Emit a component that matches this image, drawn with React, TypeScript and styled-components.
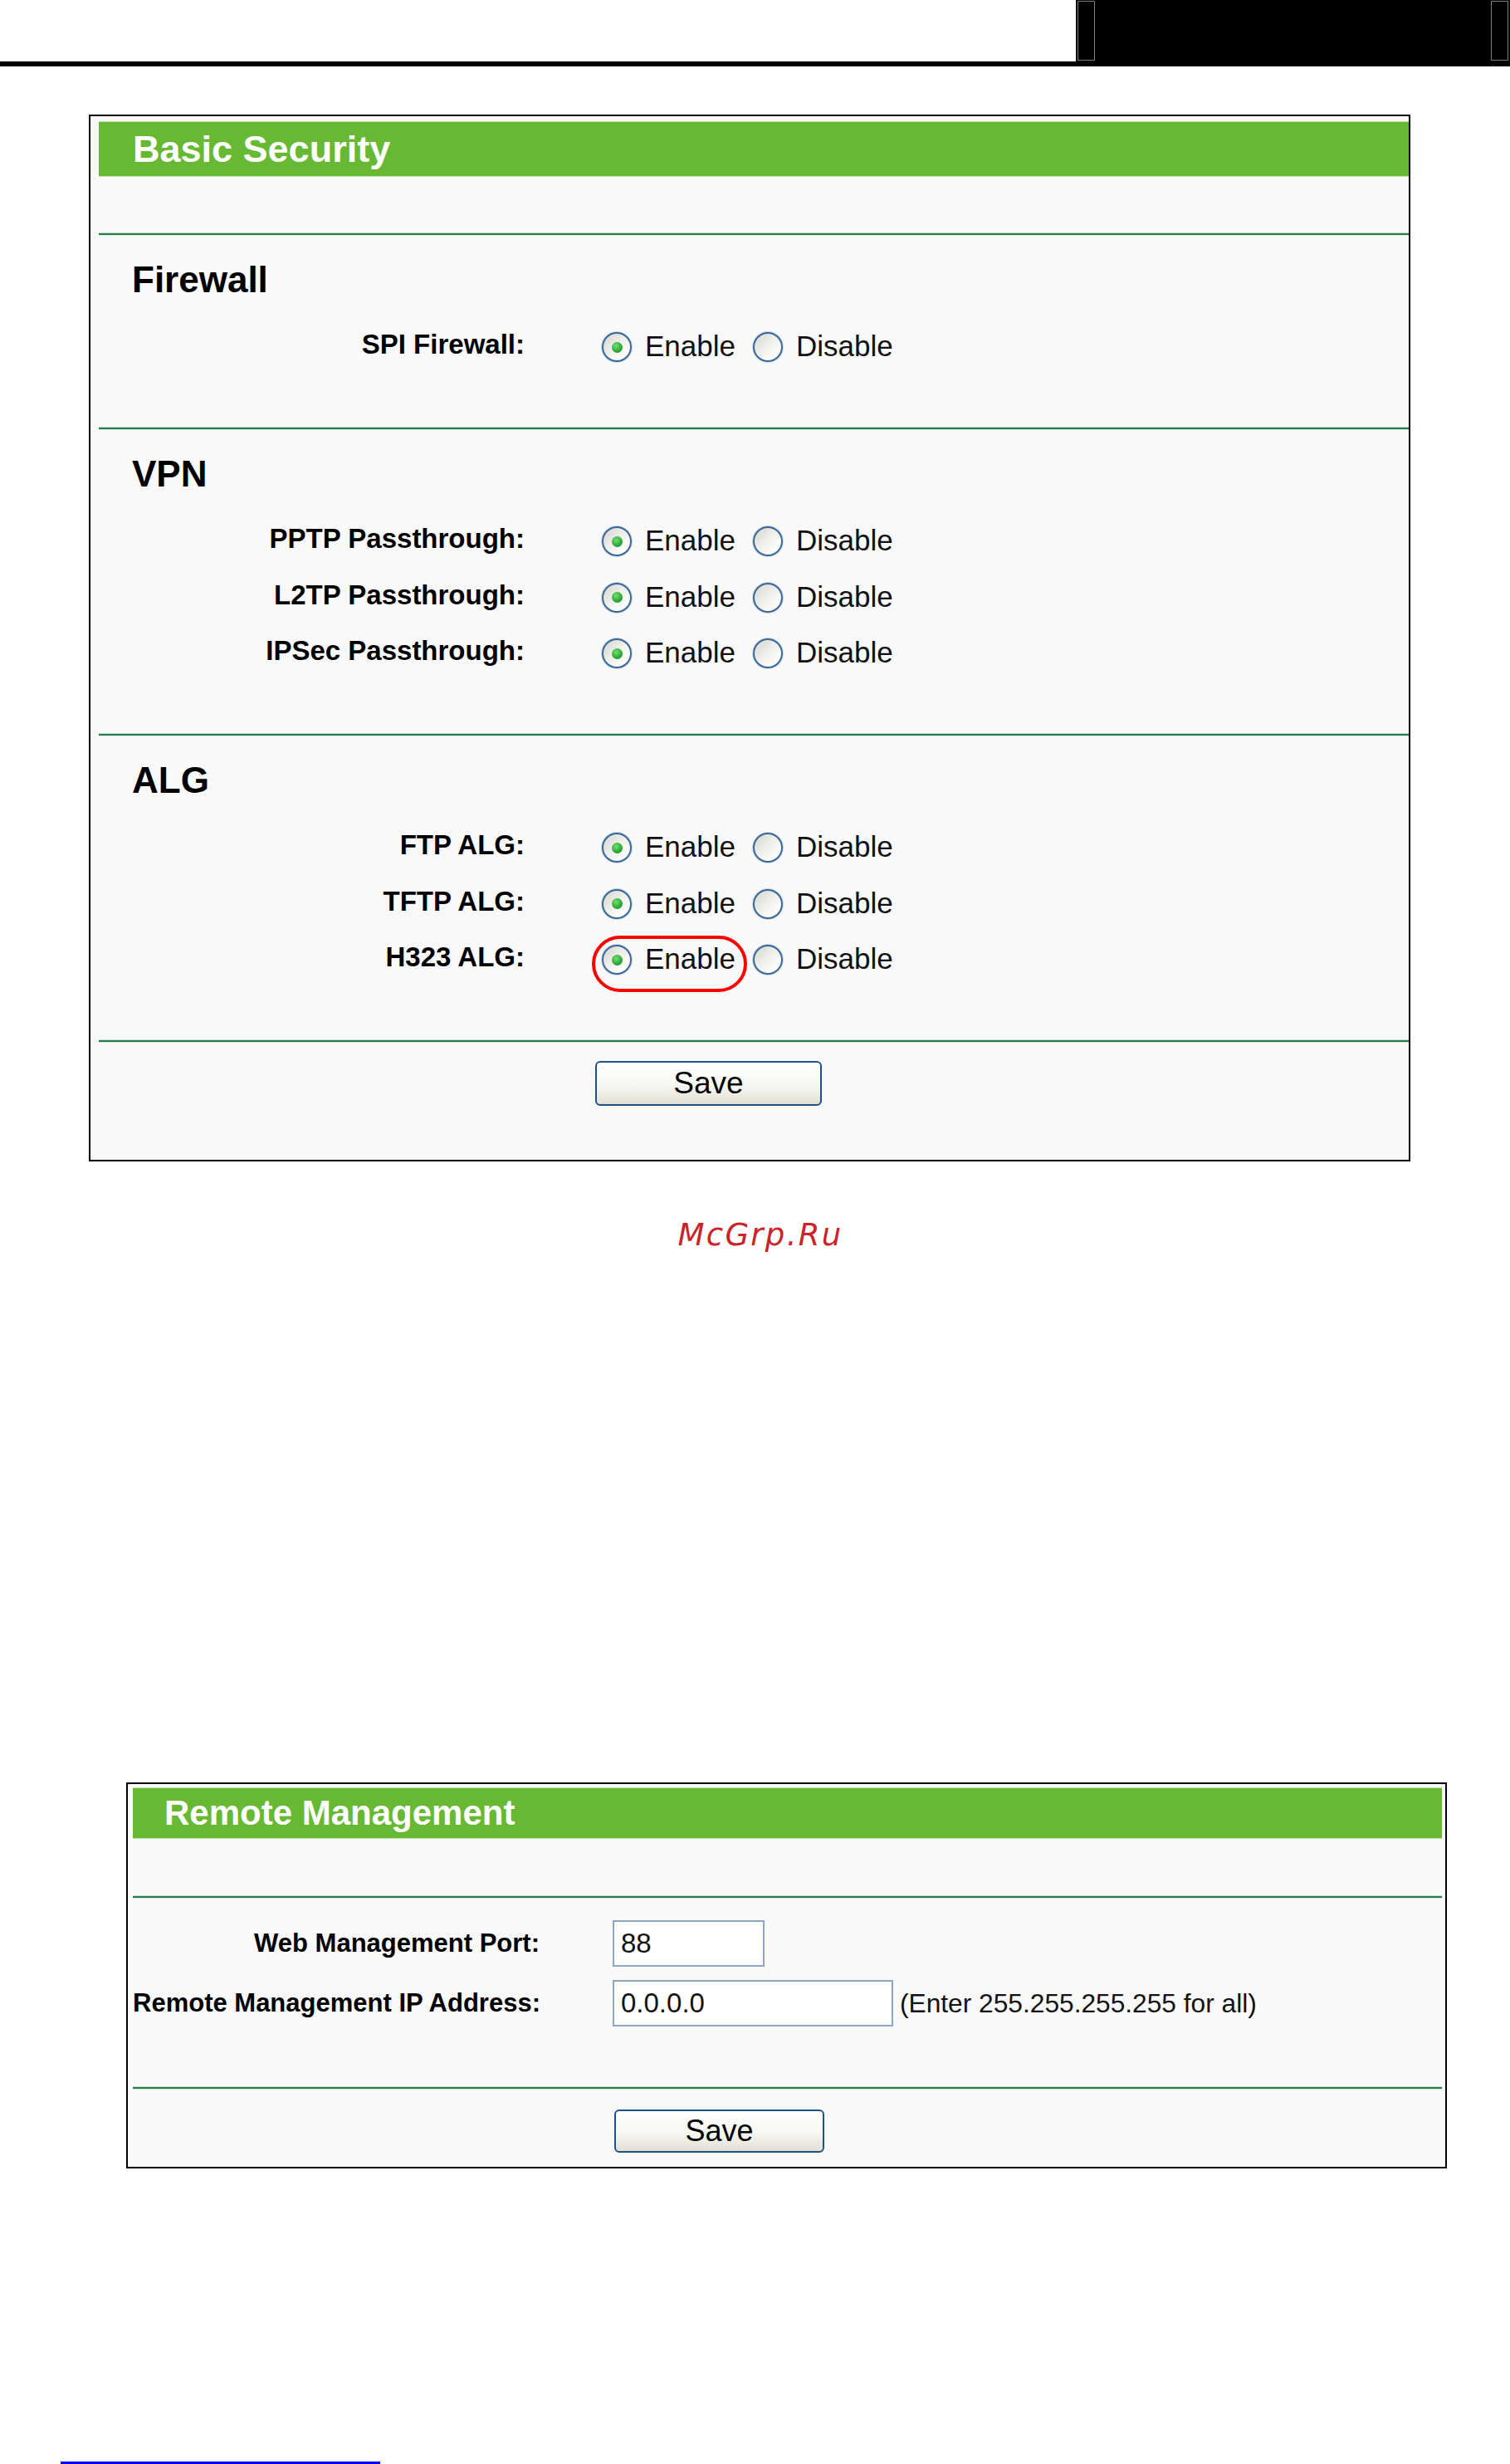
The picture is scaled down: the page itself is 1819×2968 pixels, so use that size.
import React from "react";
import styled, { createGlobalStyle, css } from "styled-components";

const GlobalStyle = createGlobalStyle`
  html, body {
    margin: 0;
    padding: 0;
    background: #ffffff;
  }
  body {
    font-family: "Liberation Sans", Arial, sans-serif;
    color: #000;
  }
`;

const Page = styled.div`
  width: 1819px;
  min-height: 2968px;
  display: flex;
  flex-direction: column;
`;

const TopBar = styled.div`
  display: flex;
  height: 80px;
`;
const TopRule = styled.div`
  flex: 1;
  border-bottom: 6px solid #000;
`;
const TopBlock = styled.div`
  width: 523px;
  background: #000;
  display: flex;
  justify-content: space-between;
  padding: 1px 2px 7px;
  box-sizing: border-box;
`;
const Bracket = styled.div`
  width: 21px;
  height: 72px;
  border: 1px solid #7c7c7c;
  box-sizing: border-box;
`;

const Panel = styled.div<{ $top: number; $left: number; $width: number; $pad: string }>`
  margin: ${(p) => p.$top}px 0 0 ${(p) => p.$left}px;
  width: ${(p) => p.$width}px;
  box-sizing: border-box;
  border: 2px solid #000;
  background: #f9f9f9;
  padding: ${(p) => p.$pad};
`;

const TitleBar = styled.div<{ $h: number; $size: number; $indent: number }>`
  height: ${(p) => p.$h}px;
  box-sizing: border-box;
  background: #67b934;
  border-top: 1px solid #c2e2ac;
  border-bottom: 1px solid #c2e2ac;
  color: #fff;
  font-weight: bold;
  font-size: ${(p) => p.$size}px;
  display: flex;
  align-items: center;
  padding-left: ${(p) => p.$indent}px;
`;

const Blank = styled.div<{ $h: number }>`
  height: ${(p) => p.$h}px;
`;

const Rule = styled.div`
  height: 4px;
  background: linear-gradient(#c3dfca 0 1px, #2b7a4b 1px 3px, #d5e9da 3px);
`;

const Heading = styled.h3`
  margin: 0;
  padding: 26.5px 0 21.75px 40px;
  font-size: 44px;
  line-height: 52px;
  font-weight: bold;
`;

const SectionBody = styled.div`
  padding-bottom: 62.25px;
`;

const Row = styled.div<{ $h: number; $label: number; $gap: number }>`
  display: grid;
  grid-template-columns: ${(p) => p.$label}px auto;
  column-gap: ${(p) => p.$gap}px;
  align-items: center;
  height: ${(p) => p.$h}px;
`;

const Label = styled.div<{ $size: number; $lift?: number }>`
  text-align: right;
  font-weight: bold;
  font-size: ${(p) => p.$size}px;
  white-space: nowrap;
  margin-top: ${(p) => -(p.$lift ?? 0)}px;
`;

const Choices = styled.div`
  display: flex;
  align-items: center;
  gap: 21px;
`;

const Choice = styled.label<{ $marked?: boolean }>`
  position: relative;
  display: flex;
  align-items: center;
  height: 36px;
  font-size: 35px;
  color: #111;
  ${(p) =>
    p.$marked &&
    css`
      &::after {
        content: "";
        position: absolute;
        left: -12px;
        right: -14px;
        top: -11px;
        bottom: -21px;
        border: 4px solid #f00;
        border-radius: 34px;
      }
    `}
`;

const Radio = styled.span<{ $on?: boolean }>`
  position: relative;
  width: 36px;
  height: 36px;
  box-sizing: border-box;
  border-radius: 50%;
  border: 2px solid #3a6896;
  box-shadow: 0 0 0 1px rgba(140, 170, 205, 0.45);
  background: linear-gradient(135deg, #d6d6cf 0%, #eeeeea 45%, #ffffff 85%);
  ${(p) =>
    p.$on &&
    css`
      &::after {
        content: "";
        position: absolute;
        left: 50%;
        top: 50%;
        width: 13px;
        height: 13px;
        margin: -6.5px 0 0 -6.5px;
        border-radius: 50%;
        background: radial-gradient(circle at 40% 35%, #6fe06f, #1f9c2a 70%);
      }
    `}
`;

const ChoiceText = styled.span`
  margin-left: 16px;
  margin-top: -2px;
`;

const Footer = styled.div<{ $pad: string; $label: number; $gap: number }>`
  display: grid;
  grid-template-columns: ${(p) => p.$label}px auto;
  column-gap: ${(p) => p.$gap}px;
  padding: ${(p) => p.$pad};
`;

const SaveButton = styled.button<{ $w: number; $h: number; $size: number; $shift: number }>`
  grid-column: 2;
  justify-self: start;
  margin-left: ${(p) => p.$shift}px;
  width: ${(p) => p.$w}px;
  height: ${(p) => p.$h}px;
  padding: 0;
  border: 2px solid #1f5087;
  border-radius: 6px;
  background: linear-gradient(#ffffff, #f7f7f3 55%, #e1dfd4);
  font-family: "Liberation Sans", Arial, sans-serif;
  font-size: ${(p) => p.$size}px;
  color: #000;
`;

const Watermark = styled.div`
  margin-top: 67px;
  padding-left: 13px;
  text-align: center;
  font-family: "DejaVu Sans", sans-serif;
  font-style: italic;
  font-size: 37px;
  line-height: 43px;
  letter-spacing: 2.3px;
  color: #cc2229;
`;

const Fields = styled.div`
  padding: 26px 0 72px;
  display: flex;
  flex-direction: column;
  gap: 16px;
`;

const FieldCell = styled.div`
  display: flex;
  align-items: center;
`;

const TextField = styled.input<{ $w: number }>`
  width: ${(p) => p.$w}px;
  height: 56px;
  box-sizing: border-box;
  border: 2px solid #8aa7c6;
  background: #fff;
  padding: 0 0 0 8px;
  font-family: "Liberation Sans", Arial, sans-serif;
  font-size: 33px;
  color: #111;
  outline: none;
`;

const Hint = styled.span`
  margin-left: 8px;
  font-size: 31.7px;
  color: #111;
  white-space: nowrap;
`;

const LinkRule = styled.div`
  margin-top: auto;
  margin-left: 73px;
  width: 385px;
  height: 3px;
  background: #0000ff;
`;

type Setting = { label: string; highlight?: boolean };
type Section = { title: string; items: Setting[] };

const sections: Section[] = [
  { title: "Firewall", items: [{ label: "SPI Firewall:" }] },
  {
    title: "VPN",
    items: [
      { label: "PPTP Passthrough:" },
      { label: "L2TP Passthrough:" },
      { label: "IPSec Passthrough:" },
    ],
  },
  {
    title: "ALG",
    items: [{ label: "FTP ALG:" }, { label: "TFTP ALG:" }, { label: "H323 ALG:", highlight: true }],
  },
];

function App() {
  return (
    <Page>
      <GlobalStyle />
      <TopBar>
        <TopRule />
        <TopBlock>
          <Bracket />
          <Bracket />
        </TopBlock>
      </TopBar>

      <Panel $top={58} $left={107} $width={1592} $pad="6px 0 0 10px">
        <TitleBar $h={67} $size={45} $indent={41}>
          Basic Security
        </TitleBar>
        <Blank $h={67} />
        {sections.map((section) => (
          <div key={section.title}>
            <Rule />
            <Heading>{section.title}</Heading>
            <SectionBody>
              {section.items.map((item) => (
                <Row key={item.label} $h={67.5} $label={513} $gap={93}>
                  <Label $size={33} $lift={6}>
                    {item.label}
                  </Label>
                  <Choices>
                    <Choice $marked={item.highlight}>
                      <Radio $on />
                      <ChoiceText>Enable</ChoiceText>
                    </Choice>
                    <Choice>
                      <Radio />
                      <ChoiceText>Disable</ChoiceText>
                    </Choice>
                  </Choices>
                </Row>
              ))}
            </SectionBody>
          </div>
        ))}
        <Rule />
        <Footer $pad="22px 0 64.5px" $label={513} $gap={93}>
          <SaveButton $w={273} $h={54} $size={37} $shift={-8}>
            Save
          </SaveButton>
        </Footer>
      </Panel>

      <Watermark>McGrp.Ru</Watermark>

      <Panel $top={638.5} $left={152} $width={1591} $pad="4px 4px 0 6px">
        <TitleBar $h={62} $size={42} $indent={38}>
          Remote Management
        </TitleBar>
        <Blank $h={68} />
        <Rule />
        <Fields>
          <Row $h={56} $label={490} $gap={88}>
            <Label $size={31}>Web Management Port:</Label>
            <FieldCell>
              <TextField $w={183} value="88" readOnly />
            </FieldCell>
          </Row>
          <Row $h={56} $label={490} $gap={88}>
            <Label $size={31}>Remote Management IP Address:</Label>
            <FieldCell>
              <TextField $w={338} value="0.0.0.0" readOnly />
              <Hint>(Enter 255.255.255.255 for all)</Hint>
            </FieldCell>
          </Row>
        </Fields>
        <Rule />
        <Footer $pad="24px 0 17px" $label={490} $gap={88}>
          <SaveButton $w={253} $h={52} $size={36} $shift={2}>
            Save
          </SaveButton>
        </Footer>
      </Panel>

      <LinkRule />
    </Page>
  );
}

export default App;
